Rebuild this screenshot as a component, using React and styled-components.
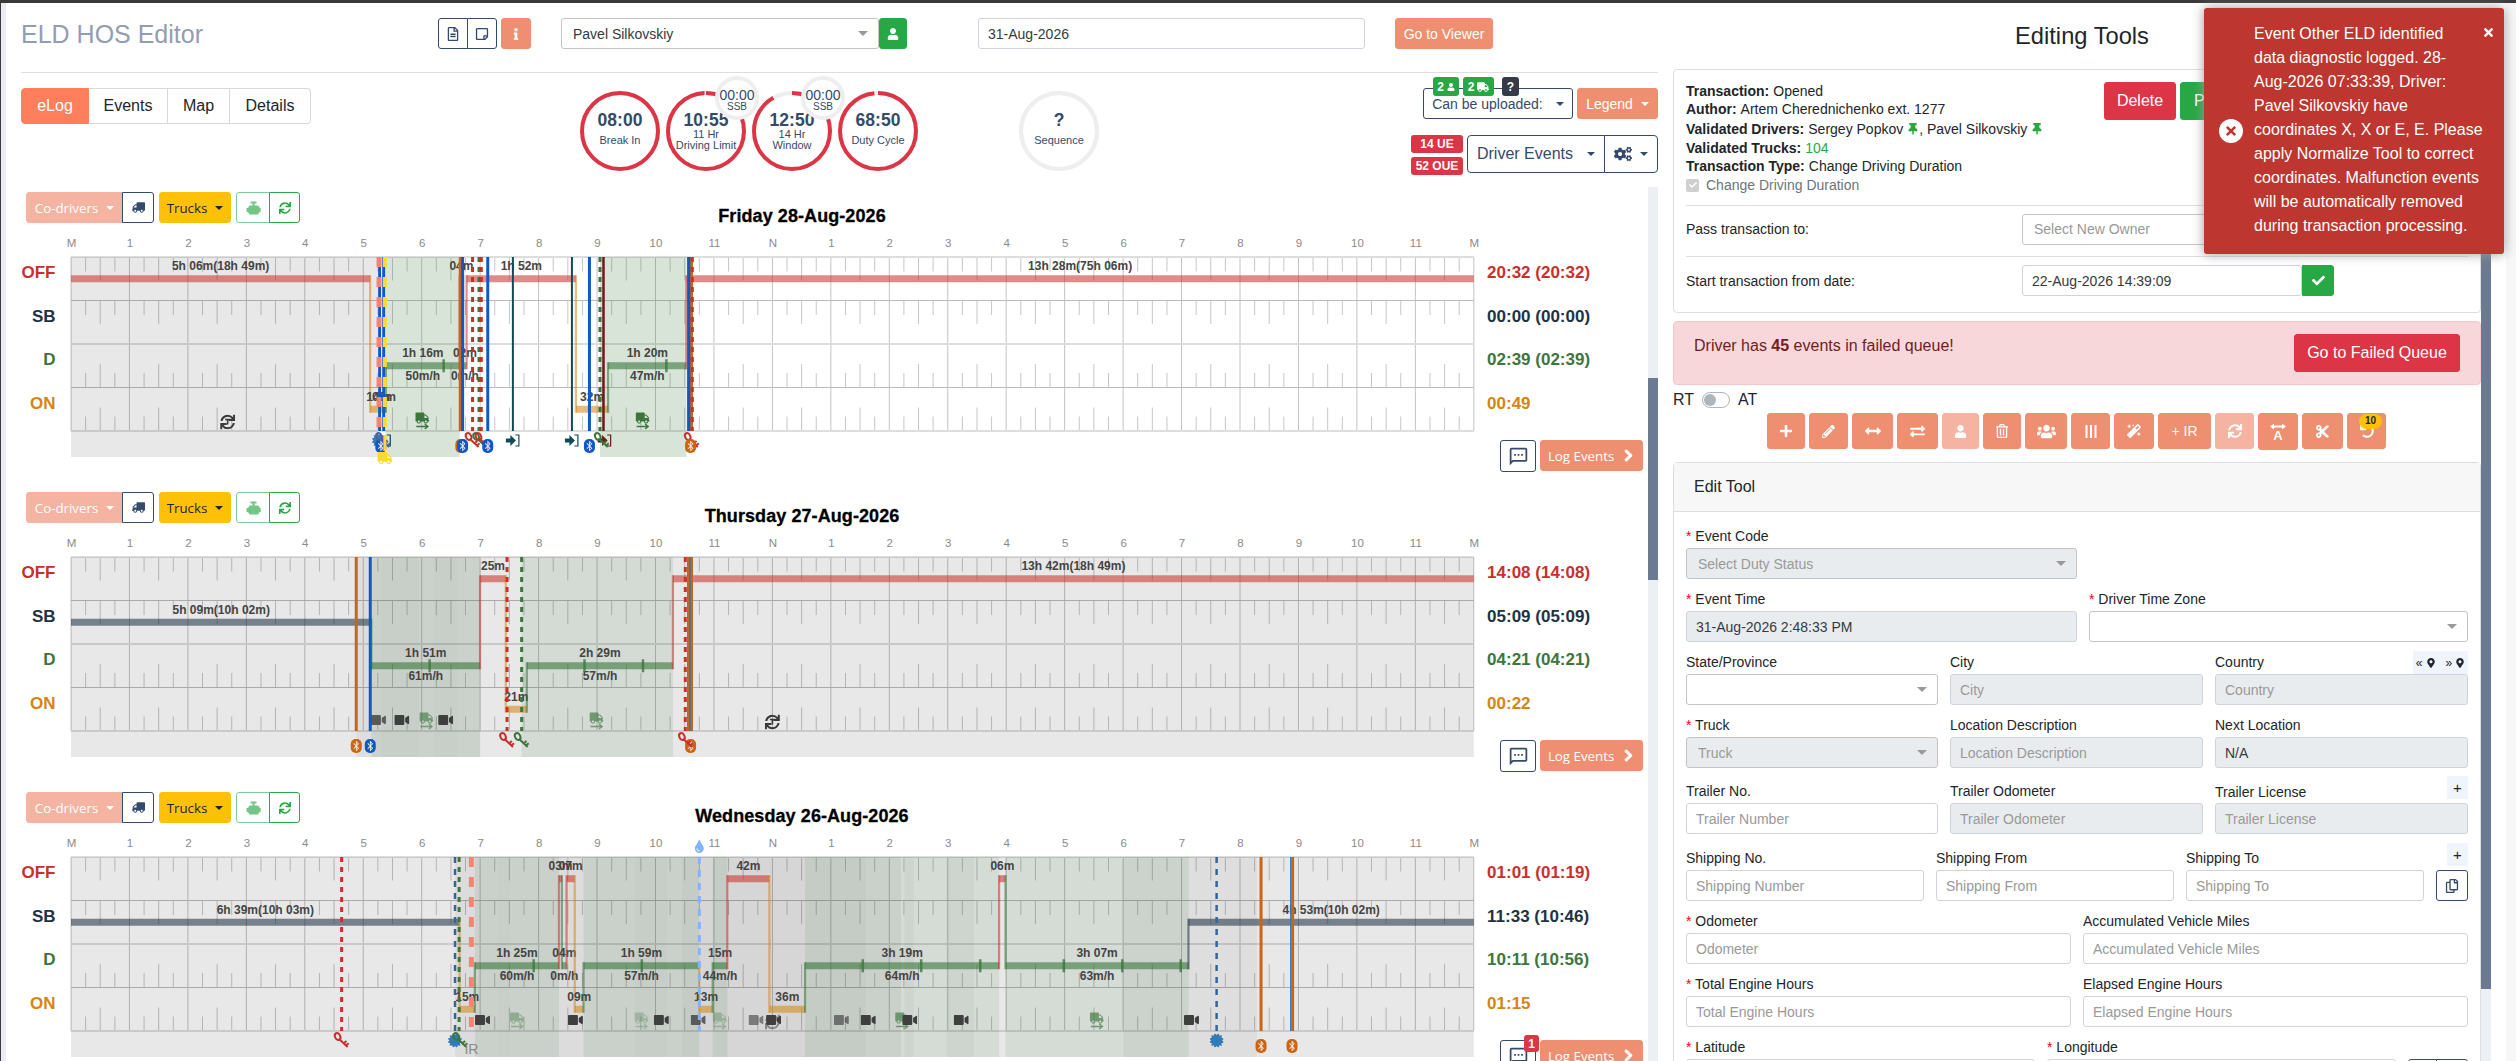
import React from "react";
import styled, { createGlobalStyle, css } from "styled-components";
import {
  FaArrowsAltH,
  FaBluetoothB,
  FaCertificate,
  FaCheck,
  FaChevronRight,
  FaCogs,
  FaCut,
  FaExchangeAlt,
  FaInfo,
  FaMagic,
  FaMapMarkerAlt,
  FaPencilAlt,
  FaPlus,
  FaRegCopy,
  FaRegFileAlt,
  FaRegStickyNote,
  FaRegTrashAlt,
  FaSync,
  FaThumbtack,
  FaTimes,
  FaTint,
  FaTruck,
  FaUndo,
  FaUser,
  FaUsers,
  FaVideo,
} from "react-icons/fa";
import { MdOutlineSms } from "react-icons/md";

const GlobalStyle = createGlobalStyle`
  * { box-sizing: border-box; }
  body {
    margin: 0;
    background: #fff;
    color: #212529;
    font-family: "Liberation Sans", Arial, sans-serif;
    font-size: 14px;
    overflow: hidden;
  }
`;

const colors = {
  navy: "#344a6b",
  coral: "#ee8f71",
  green: "#28a745",
  red: "#dc3545",
};

/* ---------- page frame ---------- */

const Page = styled.div`
  display: flex;
  width: 2516px;
  height: 1061px;
  overflow: hidden;
  border-top: 3px solid #3a3a3a;
  border-left: 1px solid #3a3a3a;
`;

const LeftStrip = styled.div`
  width: 5px;
  background: #ecebf3;
`;

const RightStrip = styled.div`
  width: 10px;
  margin-left: auto;
  background: #f7f7f7;
`;

const Editor = styled.div`
  display: flex;
  flex-direction: column;
  width: 1652px;
`;

const Tools = styled.div`
  width: 818px;
  margin-left: 15px;
`;

/* ---------- shared parts ---------- */

const Button = styled.button`
  position: relative;
  display: flex;
  align-items: center;
  justify-content: center;
  flex: none;
  gap: ${(p) => p.$gap || 8}px;
  width: ${(p) => (p.$w ? `${p.$w}px` : "auto")};
  height: ${(p) => p.$h || 31}px;
  padding: 0;
  border: 1px solid ${(p) => p.$border || p.$bg || colors.navy};
  border-radius: ${(p) => p.$radius || "3px"};
  background: ${(p) => p.$bg || "#fff"};
  color: ${(p) => p.$color || (p.$bg ? "#fff" : colors.navy)};
  font-family: ${(p) => (p.$humanist ? '"Open Sans", sans-serif' : "inherit")};
  font-size: ${(p) => p.$size || 14}px;
  white-space: nowrap;
`;

const Group = styled.div`
  display: flex;

  button + button {
    margin-left: -1px;
  }
`;

const Caret = styled.span`
  border: 4px solid transparent;
  border-top-color: currentColor;
  border-bottom: 0;
`;

const Badge = styled.span`
  display: flex;
  align-items: center;
  justify-content: center;
  gap: 3px;
  width: ${(p) => p.$w}px;
  height: ${(p) => p.$h || 18}px;
  border-radius: 3px;
  background: ${(p) => p.$bg || colors.red};
  color: #fff;
  font-size: 12px;
  font-weight: bold;
`;

const Field = styled.div`
  display: flex;
  align-items: center;
  width: ${(p) => (p.$w ? `${p.$w}px` : "100%")};
  height: 31px;
  padding: 0 9px;
  border: 1px solid #ced4da;
  border-radius: 3px;
  background: ${(p) => (p.$disabled ? "#e9ecef" : "#fff")};
  color: ${(p) => (p.$filled ? "#343a40" : "#999")};
  flex: none;
  ${(p) =>
    p.$select &&
    css`
      padding: 0 10px 0 11px;
      border-color: #c4c4c4;
    `}
`;

const SelectArrow = styled.span`
  margin-left: auto;
  border: 5px solid transparent;
  border-top-color: #999;
  border-bottom: 0;
`;

/* ---------- editor header ---------- */

const Header = styled.div`
  display: flex;
  height: 70px;
  margin-left: 15px;
  padding-top: 15px;
  border-bottom: 1px solid #dedede;
`;

const AppTitle = styled.h1`
  width: 417px;
  margin: 0;
  color: #939db0;
  font-size: 25px;
  font-weight: normal;
  line-height: 32px;
`;

const Spacer = styled.div`
  flex: none;
  width: ${(p) => p.$w}px;
`;

const SubHeader = styled.div`
  display: flex;
  height: 114px;
  padding: 15px 0 0 15px;
`;

const Tabs = styled.div`
  display: flex;
  width: 290px;
  height: 36px;
`;

const Tab = styled.div`
  flex: 0 0 ${(p) => p.$w}px;
  border: 1px solid ${(p) => (p.$active ? "#ff7f5c" : "#d6d9dc")};
  border-left-width: ${(p) => (p.$active ? 1 : 0)}px;
  color: ${(p) => (p.$active ? "#fff" : "#212529")};
  background: ${(p) => (p.$active ? "#ff7f5c" : "#fff")};
  font-size: 16px;
  line-height: 34px;
  text-align: center;

  &:first-child {
    border-radius: 4px 0 0 4px;
  }
  &:last-child {
    border-radius: 0 4px 4px 0;
  }
`;

const Gauges = styled.div`
  display: flex;
  gap: 6px;
  margin: 3px 0 0 269px;
`;

const GaugeBox = styled.div`
  position: relative;
  width: 80px;
  height: 80px;
  margin-left: ${(p) => p.$ml || 0}px;
  color: ${colors.navy};
  text-align: center;

  > svg {
    position: absolute;
    inset: 0;
  }
`;

const GaugeValue = styled.div`
  padding-top: 19px;
  font-size: 17.5px;
  font-weight: bold;
  line-height: 20px;
`;

const GaugeLabel = styled.div`
  margin-top: ${(p) => (p.$lines ? -1 : 5)}px;
  font-size: 11px;
  line-height: 11px;
`;

const MiniGauge = styled.div`
  position: absolute;
  left: 49px;
  top: -15px;
  width: 44px;
  height: 44px;
  padding-top: 8px;
  border: 4px solid #eee;
  border-radius: 50%;
  background: #fff;
  font-size: 14px;
  line-height: 14px;
  white-space: nowrap;

  span {
    display: block;
    margin: 0 -4px;
  }
  small {
    display: block;
    font-size: 10px;
    line-height: 10px;
  }
`;

const Controls = styled.div`
  display: flex;
  flex-direction: column;
  align-items: flex-end;
  gap: 16px;
  margin-left: auto;
`;

const ControlRow = styled.div`
  display: flex;
  gap: 4px;
`;

const UploadBadges = styled.div`
  position: absolute;
  top: -12px;
  left: 9px;
  display: flex;
  gap: 4px;

  span:last-child {
    margin-left: 4px;
  }
`;

const BadgeStack = styled.div`
  display: flex;
  flex-direction: column;
  gap: 4px;
`;

/* ---------- log days ---------- */

const Scroller = styled.div`
  display: flex;
  flex: 1;
  min-height: 0;
`;

const DayList = styled.div`
  flex: 1;
  overflow: hidden;
`;

const Scrollbar = styled.div`
  width: 10px;
  height: ${(p) => p.$h || 874}px;
  padding-top: ${(p) => p.$top}px;
  background: #ecf0f4;

  &::before {
    content: "";
    display: block;
    height: ${(p) => p.$thumb}px;
    background: #6b7a90;
  }
`;

const DayBox = styled.section`
  height: 300px;
`;

const DayHeader = styled.div`
  display: flex;
  height: 70px;
  padding: 5px 0 0 20px;
`;

const DayTools = styled.div`
  display: flex;
  gap: 5px;
  width: 273px;
`;

const DayTitle = styled.h2`
  width: 1006px;
  margin: 14px 0 0;
  color: #000;
  font-size: 18px;
  letter-spacing: 0.08px;
  line-height: 20px;
  text-align: center;
  -webkit-text-stroke: 0.3px #000;
`;

const DayBody = styled.div`
  display: flex;
`;

const RowNames = styled.div`
  width: 49.5px;
  margin-right: 15.8px;
  text-align: right;
`;

const RowText = styled.div`
  height: 43.5px;
  color: ${(p) => p.$color};
  font-size: 17px;
  font-weight: bold;
  line-height: 32px;
`;

const Side = styled.div`
  padding-left: 13px;
`;

const SideActions = styled.div`
  display: flex;
  gap: 4px;
  margin: 9px 0 0 13px;
`;

const CornerBadge = styled(Badge)`
  position: absolute;
  top: -6px;
  right: -4px;
`;

/* ---------- chart ---------- */

const HOUR = 58.45;
const ROW = 43.5;
const X = (h) => h * HOUR;
const rows = ["OFF", "SB", "D", "ON"];
const rowColors = { OFF: "#c9302c", SB: "#1d3344", D: "#3c763d", ON: "#d58512" };
const barColors = { OFF: "#c9302c", SB: "#1c3144", D: "#2f7233", ON: "#d58512" };
const barY = (row) => rows.indexOf(row) * ROW + ROW / 2;
const hourNames = ["M", 1, 2, 3, 4, 5, 6, 7, 8, 9, 10, 11, "N", 1, 2, 3, 4, 5, 6, 7, 8, 9, 10, 11, "M"];

const ChartSvg = styled.svg`
  flex: none;
  overflow: visible;
  font-family: "Liberation Sans", Arial, sans-serif;
`;

const HourText = styled.text`
  fill: #8a8a8a;
  font-size: 11.5px;
  text-anchor: middle;
`;

const BarText = styled.text`
  fill: #444;
  font-size: 12px;
  font-weight: bold;
  text-anchor: middle;
`;

const IrText = styled.text`
  fill: #8a8a8a;
  font-size: 14px;
  text-anchor: middle;
`;

const Grid = () => {
  const quarters = [];
  for (let i = 0; i < 96; i++) if (i % 4) quarters.push(i);
  return (
    <g>
      {quarters.map((i) =>
        rows.map((row, r) => {
          const len = i % 2 ? 14.5 : 23.5;
          const top = r < 2 ? r * ROW : (r + 1) * ROW - len;
          return <line key={`${i}${row}`} x1={X(i / 4)} x2={X(i / 4)} y1={top} y2={top + len} stroke="#c6c6c6" />;
        })
      )}
      {hourNames.map((_, i) => (
        <line key={i} x1={X(i)} x2={X(i)} y1={0} y2={4 * ROW} stroke="#c2c2c2" />
      ))}
      {[0, 1, 2, 3, 4].map((i) => (
        <line
          key={i}
          x1={0}
          x2={X(24)}
          y1={i * ROW}
          y2={i * ROW}
          stroke={i % 2 ? "#bbb" : "#ddd"}
          strokeWidth={i % 2 ? 1 : 2}
        />
      ))}
    </g>
  );
};

const lineStyles = {
  blue: { color: "#1058c8", width: 3 },
  thinBlue: { color: "#2f75b5", width: 1.5 },
  orange: { color: "#c96514", width: 3 },
  wideOrange: { color: "#c96514", width: 6 },
  teal: { color: "#0e4b56", width: 2 },
  maroon: { color: "#6b1a1a", width: 2.5 },
  redDash: { color: "#c9302c", width: 3, dash: "5 5" },
  greenDash: { color: "#3c763d", width: 3, dash: "5 5" },
  blueDash: { color: "#31669b", width: 2.5, dash: "6 6" },
  skyDash: { color: "#82b4fb", width: 3, dash: "7 6" },
  salmonDash: { color: "#ff8173", width: 5, dash: "10 10" },
  yellowDash: { color: "#ffd92e", width: 4, dash: "10 10" },
};

const KeyMark = ({ x, y, color }) => (
  <g transform={`translate(${x} ${y})`} fill="none" stroke={color} strokeWidth="2">
    <ellipse cx="-4" cy="-3.5" rx="2.6" ry="3.6" transform="rotate(-25 -4 -3.5)" />
    <path d="M-2 -0.5 L6 7 M2.2 3.2 L4.8 1 M4.4 5.4 L7 3.2" />
  </g>
);

const BtMark = ({ x, y, color }) => (
  <g>
    <rect x={x - 5.5} y={y - 7} width="11" height="14" rx="5" fill={color} />
    <FaBluetoothB x={x - 5.5} y={y - 5.5} size={11} color="#f4e8e0" />
  </g>
);

const TruckMark = ({ x, y, opacity }) => (
  <g opacity={opacity}>
    <FaTruck x={x - 7} y={y - 9} size={14} color="#3c763d" />
    <path
      d={`M${x - 6} ${y + 6.5} h11 M${x + 2.5} ${y + 4} l3 2.5 l-3 2.5`}
      fill="none"
      stroke="#3c763d"
      strokeWidth="1.5"
    />
  </g>
);

const SyncMark = ({ x, y, opacity }) => (
  <g opacity={opacity}>
    <FaSync x={x - 7.5} y={y - 7.5} size={15} color="#3a3a3a" />
    <path d={`M${x - 2.5} ${y - 2.5} h5 M${x} ${y - 2.5} v5`} stroke="#3a3a3a" strokeWidth="1.6" />
  </g>
);

const EnterMark = ({ x, y, color }) => (
  <g transform={`translate(${x} ${y})`}>
    <path d="M-7 -2 h4.5 v-3.5 l5.5 5.5 l-5.5 5.5 v-3.5 h-4.5z" fill={color} />
    <path d="M2.5 -5.5 h3.5 v11 h-3.5" fill="none" stroke={color} strokeWidth="1.2" />
  </g>
);

const Mark = ({ type, h, color, opacity }) => {
  const x = X(h);
  switch (type) {
    case "camera":
      return <FaVideo x={x - 7.5} y={155.5} size={15} color="#3f3f3f" opacity={opacity} />;
    case "truck":
      return <TruckMark x={x} y={163} opacity={opacity} />;
    case "sync":
      return <SyncMark x={x} y={165} opacity={opacity} />;
    case "key":
      return <KeyMark x={x} y={183} color={color} />;
    case "bt":
      return <BtMark x={x} y={189} color={color} />;
    case "seal":
      return <FaCertificate x={x - 7} y={176.5} size={14} color="#337ab7" />;
    case "enter":
      return <EnterMark x={x} y={183.5} color={color} />;
    case "yellowTruck":
      return (
        <g>
          <rect x={x - 1.5} y={178} width="3" height="16" fill="#ffd92e" />
          <FaTruck x={x - 7.5} y={193.5} size={15} color="#ffd92e" />
        </g>
      );
    case "drop":
      return <FaTint x={x - 6.5} y={-17} size={13} color="#82b4fb" />;
    case "ir":
      return <IrText x={x} y={197}>IR</IrText>;
    default:
      return null;
  }
};

// these sit under the event lines, everything else is drawn over them
const isInner = (mark) => ["camera", "truck", "sync"].includes(mark[0]);

const Chart = ({ day }) => (
  <ChartSvg width={X(24)} height={200}>
    {hourNames.map((name, i) => (
      <HourText key={i} x={X(i) + 0.5} y={-10}>
        {name}
      </HourText>
    ))}
    <Grid />
    {day.bands.map(([from, to, kind], i) => (
      <rect
        key={i}
        x={X(from)}
        width={X(to) - X(from)}
        y={0}
        height={200}
        fill={kind === "green" ? "#3c763d" : "#000"}
        fillOpacity={kind === "green" ? day.greenAlpha : kind}
      />
    ))}
    {day.segments.map(([row, from, to, label, speed], i) => {
      const prev = day.segments[i - 1];
      const y = barY(row);
      return (
        <g key={i}>
          {prev && prev[0] !== row && (
            <rect
              x={X(from) - 1.2}
              width={2.2}
              y={Math.min(barY(prev[0]), y) - 3.5}
              height={Math.abs(barY(prev[0]) - y) + 7}
              fill={barColors[row]}
              opacity=".55"
            />
          )}
          <rect x={X(from)} width={X(to) - X(from)} y={y - 3.5} height={7} fill={barColors[row]} opacity=".56" />
          <BarText x={X((from + to) / 2)} y={y - 8.5}>
            {label}
          </BarText>
          {speed && (
            <BarText x={X((from + to) / 2)} y={y + 14.5}>
              {speed}
            </BarText>
          )}
        </g>
      );
    })}
    {day.ticks.map((h) => (
      <rect key={h} x={X(h) - 1.5} y={barY("D") - 6.5} width={2.5} height={13} fill="#3c763d" opacity=".8" />
    ))}
    {day.marks.filter(isInner).map(([type, h, , opacity], i) => (
      <Mark key={i} type={type} h={h} opacity={opacity} />
    ))}
    {day.lines.map(([style, h], i) => {
      const s = lineStyles[style];
      return (
        <line key={i} x1={X(h)} x2={X(h)} y1={0} y2={174} stroke={s.color} strokeWidth={s.width} strokeDasharray={s.dash} />
      );
    })}
    {day.marks
      .filter((mark) => !isInner(mark))
      .map(([type, h, color], i) => (
        <Mark key={i} type={type} h={h} color={color} />
      ))}
  </ChartSvg>
);

const RED = "#c9302c";
const GREEN = "#3c763d";
const BLUE = "#1058c8";
const ORANGE = "#c96514";
const TEAL = "#0e4b56";

const days = [
  {
    title: "Friday 28-Aug-2026",
    totals: ["20:32 (20:32)", "00:00 (00:00)", "02:39 (02:39)", "00:49"],
    greenAlpha: 0.2,
    bands: [
      [0, 5.25, 0.09],
      [5.38, 6.65, "green"],
      [9.05, 10.53, "green"],
    ],
    segments: [
      ["OFF", 0, 5.12, "5h 06m(18h 49m)"],
      ["ON", 5.12, 5.39, "14m"],
      ["ON", 5.32, 5.39, "02m"],
      ["D", 5.39, 6.65, "1h 16m", "50m/h"],
      ["OFF", 6.65, 6.71, "04m"],
      ["D", 6.71, 6.77, "02m", "0m/h"],
      ["OFF", 6.77, 8.64, "1h 52m"],
      ["ON", 8.64, 9.19, "32m"],
      ["D", 9.19, 10.53, "1h 20m", "47m/h"],
      ["OFF", 10.53, 24, "13h 28m(75h 06m)"],
    ],
    ticks: [6.38, 10.19],
    lines: [
      ["blue", 5.28],
      ["blue", 5.35],
      ["salmonDash", 5.27],
      ["yellowDash", 5.37],
      ["orange", 6.66],
      ["blue", 6.7],
      ["redDash", 6.87],
      ["greenDash", 6.98],
      ["redDash", 7.02],
      ["blue", 7.13],
      ["teal", 7.56],
      ["teal", 8.57],
      ["blue", 8.87],
      ["greenDash", 9.05],
      ["maroon", 9.11],
      ["wideOrange", 10.59],
      ["blue", 10.57],
      ["redDash", 10.63],
    ],
    marks: [
      ["sync", 2.68],
      ["truck", 6.01],
      ["truck", 9.78],
      ["enter", 5.36, TEAL],
      ["seal", 5.27],
      ["bt", 5.3, BLUE],
      ["key", 5.34, "#4d5fa8"],
      ["yellowTruck", 5.37],
      ["key", 6.87, RED],
      ["key", 7.0, GREEN],
      ["key", 7.04, RED],
      ["bt", 6.67, ORANGE],
      ["bt", 6.7, BLUE],
      ["bt", 7.13, BLUE],
      ["enter", 7.56, TEAL],
      ["enter", 8.57, TEAL],
      ["bt", 8.87, BLUE],
      ["enter", 9.13, "#6b1a1a"],
      ["key", 9.08, GREEN],
      ["key", 10.62, RED],
      ["bt", 10.6, ORANGE],
    ],
  },
  {
    title: "Thursday 27-Aug-2026",
    totals: ["14:08 (14:08)", "05:09 (05:09)", "04:21 (04:21)", "00:22"],
    greenAlpha: 0.115,
    bands: [
      [0, 24, 0.09],
      [4.88, 7, 0.045],
      [5.3, 5.95, 0.015],
      [6.2, 6.62, 0.015],
      [5.14, 7, "green"],
      [7.71, 10.3, "green"],
    ],
    segments: [
      ["SB", 0, 5.14, "5h 09m(10h 02m)"],
      ["D", 5.14, 7, "1h 51m", "61m/h"],
      ["OFF", 7, 7.44, "25m"],
      ["ON", 7.44, 7.8, "21m"],
      ["D", 7.8, 10.3, "2h 29m", "57m/h"],
      ["OFF", 10.3, 24, "13h 42m(18h 49m)"],
    ],
    ticks: [6.14, 8.79, 9.79],
    lines: [
      ["orange", 4.88],
      ["blue", 5.12],
      ["redDash", 7.46],
      ["greenDash", 7.71],
      ["redDash", 10.51],
      ["wideOrange", 10.59],
      ["thinBlue", 10.59],
    ],
    marks: [
      ["camera", 5.26, null, 0.8],
      ["camera", 5.66],
      ["truck", 6.08, null, 0.6],
      ["camera", 6.41],
      ["truck", 8.99, null, 0.65],
      ["sync", 12],
      ["bt", 4.88, ORANGE],
      ["bt", 5.12, BLUE],
      ["key", 7.46, RED],
      ["key", 7.71, GREEN],
      ["bt", 10.6, ORANGE],
      ["key", 10.52, RED],
    ],
  },
  {
    title: "Wednesday 26-Aug-2026",
    totals: ["01:01 (01:19)", "11:33 (10:46)", "10:11 (10:56)", "01:15"],
    comments: 1,
    greenAlpha: 0.105,
    bands: [
      [0, 24, 0.09],
      [6.57, 14.2, 0.05],
      [7.3, 7.5, 0.012],
      [9.65, 10.2, 0.015],
      [10.45, 13.6, 0.025],
      [14.26, 14.42, 0.03],
      [14.98, 15.45, 0.03],
      [18, 20.29, 0.045],
      [6.91, 8.35, "green"],
      [8.77, 10.75, "green"],
      [10.98, 11.23, "green"],
      [12.56, 15.88, "green"],
      [15.99, 19.12, "green"],
    ],
    segments: [
      ["SB", 0, 6.65, "6h 39m(10h 03m)"],
      ["ON", 6.65, 6.91, "15m"],
      ["D", 6.91, 8.35, "1h 25m", "60m/h"],
      ["OFF", 8.35, 8.4, "03m"],
      ["D", 8.4, 8.48, "04m", "0m/h"],
      ["OFF", 8.48, 8.62, "07m"],
      ["ON", 8.62, 8.77, "09m"],
      ["D", 8.77, 10.75, "1h 59m", "57m/h"],
      ["ON", 10.75, 10.98, "13m"],
      ["D", 10.98, 11.23, "15m", "44m/h"],
      ["OFF", 11.23, 11.95, "42m"],
      ["ON", 11.95, 12.56, "36m"],
      ["D", 12.56, 15.88, "3h 19m", "64m/h"],
      ["OFF", 15.88, 15.99, "06m"],
      ["D", 15.99, 19.12, "3h 07m", "63m/h"],
      ["SB", 19.12, 24, "4h 53m(10h 02m)"],
    ],
    ticks: [7.92, 9.77, 13.55, 14.55, 15.56, 16.99, 17.99, 18.99],
    lines: [
      ["redDash", 4.63],
      ["blueDash", 6.57],
      ["greenDash", 6.64],
      ["salmonDash", 6.85],
      ["skyDash", 10.75],
      ["blueDash", 19.6],
      ["orange", 20.36],
      ["thinBlue", 20.87],
      ["orange", 20.9],
    ],
    marks: [
      ["camera", 7.04],
      ["truck", 7.63, null, 0.4],
      ["camera", 8.63],
      ["truck", 9.76, null, 0.28],
      ["camera", 10.1],
      ["camera", 10.73, null, 0.8],
      ["truck", 11.1, null, 0.32],
      ["camera", 11.72, null, 0.6],
      ["sync", 12, null, 0.5],
      ["camera", 12.02],
      ["camera", 13.18, null, 0.65],
      ["camera", 13.64],
      ["truck", 14.22, null, 0.65],
      ["camera", 14.35],
      ["camera", 15.23],
      ["truck", 17.55, null, 0.65],
      ["camera", 19.17],
      ["key", 4.63, RED],
      ["seal", 6.57],
      ["key", 6.66, GREEN],
      ["ir", 6.85],
      ["drop", 10.75],
      ["seal", 19.6],
      ["bt", 20.36, ORANGE],
      ["bt", 20.89, ORANGE],
    ],
  },
];

const EngineIcon = () => (
  <svg width="15" height="14" viewBox="0 0 15 14" fill="#74c687">
    <rect x="4.5" y="0.5" width="6" height="2" />
    <rect x="6.5" y="2" width="2" height="3" />
    <path d="M3.5 4.5 h8 l2 1 v1.5 h1.2 v4 h-1.2 l-1.5 2.5 h-8.5 l-1.5 -2.5 h-1.5 v-4 h1.5z" />
  </svg>
);

const Flip = styled.span`
  display: flex;
  transform: scaleX(-1);
`;

const Day = ({ day }) => (
  <DayBox>
    <DayHeader>
      <DayTools>
        <Group>
          <Button $w={97} $bg="#f5b3a1" $humanist $size={13.3} $radius="3px 0 0 3px">
            Co-drivers <Caret />
          </Button>
          <Button $w={32} $radius="0 3px 3px 0">
            <Flip>
              <FaTruck size={13} />
            </Flip>
          </Button>
        </Group>
        <Button $w={72} $bg="#ffc107" $color="#212529" $humanist $size={13.3}>
          Trucks <Caret />
        </Button>
        <Group>
          <Button $w={34} $border="#7fcb91" $radius="3px 0 0 3px">
            <EngineIcon />
          </Button>
          <Button $w={31} $border={colors.green} $color={colors.green} $radius="0 3px 3px 0">
            <FaSync size={12} />
          </Button>
        </Group>
      </DayTools>
      <DayTitle>{day.title}</DayTitle>
    </DayHeader>
    <DayBody>
      <RowNames>
        {rows.map((row) => (
          <RowText key={row} $color={rowColors[row]}>
            {row}
          </RowText>
        ))}
      </RowNames>
      <Chart day={day} />
      <Side>
        {day.totals.map((total, i) => (
          <RowText key={i} $color={rowColors[rows[i]]}>
            {total}
          </RowText>
        ))}
        <SideActions>
          <Button $w={36} $h={32}>
            <MdOutlineSms size={21} />
            {day.comments && (
              <CornerBadge $w={15} $h={17}>
                {day.comments}
              </CornerBadge>
            )}
          </Button>
          <Button $w={103} $bg={colors.coral} $humanist $size={13.3}>
            Log Events <FaChevronRight size={13} strokeWidth={40} stroke="currentColor" />
          </Button>
        </SideActions>
      </Side>
    </DayBody>
  </DayBox>
);

const Gauge = ({ value, label, lines, part = 1, color = colors.red, mini, ml }) => {
  const length = 2 * Math.PI * 38;
  return (
    <GaugeBox $ml={ml}>
      <svg width="80" height="80" fill="none" strokeWidth="4">
        <circle cx="40" cy="40" r="38" stroke="#eee" />
        <circle
          cx="40"
          cy="40"
          r="38"
          stroke={color}
          strokeDasharray={`${length * part} ${length}`}
          transform="rotate(-90 40 40)"
        />
      </svg>
      <GaugeValue>{value}</GaugeValue>
      <GaugeLabel $lines={lines}>
        {label}
        {lines && (
          <>
            <br />
            {lines}
          </>
        )}
      </GaugeLabel>
      {mini && (
        <MiniGauge>
          <span>{mini}</span>
          <small>SSB</small>
        </MiniGauge>
      )}
    </GaugeBox>
  );
};

/* ---------- editing tools ---------- */

const ToolsTitle = styled.h2`
  height: 66px;
  margin: 0;
  padding: 16px 0 0;
  font-size: 23.7px;
  font-weight: normal;
  line-height: 34px;
  text-align: center;
`;

const ToolsBody = styled.div`
  display: flex;
`;

const ToolsColumn = styled.div`
  width: 808px;
`;

const Card = styled.div`
  border: 1px solid #dedede;
  border-radius: 4px;
`;

const InfoCard = styled(Card)`
  height: 244px;
  padding: 12px 12px 0;
`;

const InfoTop = styled.div`
  display: flex;
  justify-content: space-between;
  height: 124px;
  border-bottom: 1px solid #dedede;
`;

const InfoLine = styled.div`
  display: flex;
  align-items: center;
  height: ${(p) => p.$h || 18}px;
  white-space: pre;
  color: ${(p) => (p.$muted ? "#6c757d" : "inherit")};

  b {
    margin-right: 4px;
  }
  em {
    color: ${colors.green};
    font-style: normal;
  }
`;

const CheckBox = styled.span`
  display: flex;
  align-items: center;
  justify-content: center;
  width: 13px;
  height: 13px;
  margin-right: 7px;
  border-radius: 2px;
  background: #cfcfcf;
  color: #fff;
`;

const InfoButtons = styled.div`
  display: flex;
  gap: 4px;
  width: 364px;
`;

const InfoRow = styled.div`
  display: flex;
  align-items: center;
  height: 51px;
  padding-bottom: 4px;
  border-bottom: ${(p) => (p.$last ? 0 : "1px solid #dedede")};

  > span:first-child {
    width: 336px;
  }
`;

const Alert = styled.div`
  display: flex;
  justify-content: space-between;
  height: 64px;
  margin-top: 8px;
  padding: 12px 20px;
  border: 1px solid #f5c6cb;
  border-radius: 4px;
  background: #f8d7da;
  color: #721c24;
  font-size: 16px;
  line-height: 24px;
`;

const Toggle = styled.div`
  display: flex;
  align-items: center;
  gap: 8px;
  height: 28px;
  padding-top: 2px;
  font-size: 16px;
`;

const Switch = styled.span`
  width: 28px;
  height: 16px;
  padding: 1px;
  border: 1px solid #adb5bd;
  border-radius: 8px;

  &::before {
    content: "";
    display: block;
    width: 12px;
    height: 12px;
    border-radius: 50%;
    background: #adb5bd;
  }
`;

const ToolRow = styled.div`
  display: flex;
  gap: 4px;
  height: 49px;
  padding-left: 94px;
`;

const TextWidth = styled.span`
  display: flex;
  flex-direction: column;
  align-items: center;
  font-size: 13px;
  font-weight: bold;
  line-height: 11px;
`;

const RoundBadge = styled.span`
  position: absolute;
  top: 0;
  right: 3px;
  width: 23px;
  height: 15px;
  border-radius: 8px;
  background: #ffc107;
  color: #212529;
  font-size: 10px;
  font-weight: bold;
  line-height: 14px;
`;

const CardHeader = styled.div`
  height: 49px;
  padding-left: 20px;
  border-bottom: 1px solid #dedede;
  background: #f7f7f7;
  font-size: 16px;
  line-height: 47px;
`;

const Form = styled.div`
  padding: 4px 12px 0;
`;

const FormRow = styled.div`
  display: flex;
  align-items: flex-end;
  gap: 12px;
  height: ${(p) => p.$h || 63}px;
`;

const FormItem = styled.div`
  width: ${(p) => p.$w}px;
  flex: none;
`;

const LabelRow = styled.div`
  display: flex;
  align-items: flex-end;
  justify-content: space-between;
  height: 24px;

  label {
    line-height: 16px;
    margin-bottom: ${(p) => (p.$low ? 3 : 4)}px;
  }
  i {
    color: red;
    font-style: normal;
  }
`;

const MiniButton = styled.span`
  display: flex;
  align-items: center;
  justify-content: center;
  gap: 10px;
  width: ${(p) => p.$w}px;
  height: 23px;
  margin-bottom: ${(p) => p.$mb || 0}px;
  background: #eff4fd;
  font-size: ${(p) => (p.$w > 30 ? 12 : 15)}px;

  span {
    display: flex;
    align-items: center;
    gap: 3px;
  }
`;

const Toast = styled.div`
  position: absolute;
  top: 8px;
  left: 2204px;
  width: 300px;
  height: 246px;
  padding: 14px 0 0 50px;
  border-radius: 3px;
  background: #bd362f;
  box-shadow: 0 0 12px #999;
  color: #fff;
  font-size: 16px;
  line-height: 24px;
`;

const ToastText = styled.div`
  white-space: nowrap;
`;

const ToastIcon = styled.span`
  position: absolute;
  top: 111px;
  left: 15px;
  display: flex;
  align-items: center;
  justify-content: center;
  width: 24px;
  height: 24px;
  border-radius: 50%;
  background: #fff;
  color: #bd362f;
`;

const ToastClose = styled.span`
  position: absolute;
  top: 18px;
  right: 9px;
  display: flex;
`;

const Input = ({ label, w, text, required, disabled, select, filled, extra, extraW, extraMb, low }) => (
  <FormItem $w={w}>
    <LabelRow $low={low}>
      <label>
        {required && <i>* </i>}
        {label}
      </label>
      {extra && (
        <MiniButton $w={extraW} $mb={extraMb}>
          {extra}
        </MiniButton>
      )}
    </LabelRow>
    <Field $disabled={disabled} $select={select} $filled={filled}>
      {text}
      {select && <SelectArrow />}
    </Field>
  </FormItem>
);

const toolButtons = [
  { w: 38, icon: <FaPlus size={14} /> },
  { w: 39, icon: <FaPencilAlt size={13} /> },
  { w: 41, icon: <FaArrowsAltH size={16} /> },
  { w: 41, icon: <FaExchangeAlt size={15} /> },
  { w: 37, icon: <FaUser size={13} />, off: true },
  { w: 38, icon: <FaRegTrashAlt size={14} /> },
  { w: 42, icon: <FaUsers size={19} /> },
  {
    w: 39,
    icon: (
      <svg width="12" height="13" stroke="#fff" strokeWidth="2">
        <path d="M1.5 0 V13 M6 0 V13 M10.5 0 V13" />
      </svg>
    ),
  },
  { w: 40, icon: <FaMagic size={14} /> },
  { w: 53, icon: "+ IR" },
  { w: 39, icon: <FaSync size={14} />, off: true },
  {
    w: 40,
    h: 37,
    icon: (
      <TextWidth>
        <svg width="16" height="7" viewBox="0 0 16 7" fill="#fff">
          <path d="M0 3.5 L4 0.5 V2.5 H12 V0.5 L16 3.5 L12 6.5 V4.5 H4 V6.5z" />
        </svg>
        <span>A</span>
      </TextWidth>
    ),
  },
  { w: 41, icon: <FaCut size={15} /> },
  {
    w: 39,
    icon: (
      <>
        <FaUndo size={14} />
        <RoundBadge>10</RoundBadge>
      </>
    ),
  },
];

const toastLines = [
  "Event Other ELD identified",
  "data diagnostic logged. 28-",
  "Aug-2026 07:33:39, Driver:",
  "Pavel Silkovskiy have",
  "coordinates X, X or E, E. Please",
  "apply Normalize Tool to correct",
  "coordinates. Malfunction events",
  "will be automatically removed",
  "during transaction processing.",
];

const App = () => (
  <>
    <GlobalStyle />
    <Page>
      <LeftStrip />
      <Editor>
        <Header>
          <AppTitle>ELD HOS Editor</AppTitle>
          <Group>
            <Button $w={30} $radius="3px 0 0 3px">
              <FaRegFileAlt size={14} />
            </Button>
            <Button $w={30} $radius="0 3px 3px 0">
              <FaRegStickyNote size={14} />
            </Button>
          </Group>
          <Spacer $w={4} />
          <Button $w={30} $bg={colors.coral}>
            <FaInfo size={12} />
          </Button>
          <Spacer $w={30} />
          <Field $w={318} $select $filled>
            Pavel Silkovskiy <SelectArrow />
          </Field>
          <Button $w={28} $bg={colors.green}>
            <FaUser size={12} />
          </Button>
          <Spacer $w={71} />
          <Field $w={387} $filled>
            31-Aug-2026
          </Field>
          <Spacer $w={30} />
          <Button $w={98} $bg={colors.coral}>
            Go to Viewer
          </Button>
        </Header>
        <SubHeader>
          <Tabs>
            <Tab $w={68} $active>eLog</Tab>
            <Tab $w={79}>Events</Tab>
            <Tab $w={62}>Map</Tab>
            <Tab $w={81}>Details</Tab>
          </Tabs>
          <Gauges>
            <Gauge value="08:00" label="Break In" />
            <Gauge value="10:55" label="11 Hr" lines="Driving Limit" part={0.992} mini="00:00" />
            <Gauge value="12:50" label="14 Hr" lines="Window" part={0.917} mini="00:00" />
            <Gauge value="68:50" label="Duty Cycle" part={0.983} />
            <Gauge value="?" label="Sequence" color="#eee" ml={95} />
          </Gauges>
          <Controls>
            <ControlRow>
              <Button $w={150} $gap={13}>
                <UploadBadges>
                  <Badge $w={26} $h={19} $bg={colors.green}>
                    2 <FaUser size={8} />
                  </Badge>
                  <Badge $w={31} $h={19} $bg={colors.green}>
                    2 <FaTruck size={12} />
                  </Badge>
                  <Badge $w={17} $h={19} $bg="#343a48">?</Badge>
                </UploadBadges>
                Can be uploaded: <Caret />
              </Button>
              <Button $w={81} $bg={colors.coral}>
                Legend <Caret />
              </Button>
            </ControlRow>
            <ControlRow>
              <BadgeStack>
                <Badge $w={52}>14 UE</Badge>
                <Badge $w={52}>52 OUE</Badge>
              </BadgeStack>
              <Group>
                <Button $w={138} $h={38} $size={16} $gap={14} $radius="4px 0 0 4px">
                  Driver Events <Caret />
                </Button>
                <Button $w={54} $h={38} $radius="0 4px 4px 0">
                  <FaCogs size={18} /> <Caret />
                </Button>
              </Group>
            </ControlRow>
          </Controls>
        </SubHeader>
        <Scroller>
          <DayList>
            {days.map((day) => (
              <Day key={day.title} day={day} />
            ))}
          </DayList>
          <Scrollbar $top={191} $thumb={202} />
        </Scroller>
      </Editor>
      <Tools>
        <ToolsTitle>Editing Tools</ToolsTitle>
        <ToolsBody>
          <ToolsColumn>
            <InfoCard>
              <InfoTop>
                <div>
                  <InfoLine><b>Transaction:</b>Opened</InfoLine>
                  <InfoLine><b>Author:</b>Artem Cherednichenko ext. 1277</InfoLine>
                  <InfoLine $h={22}>
                    <b>Validated Drivers:</b>Sergey Popkov <FaThumbtack size={12} color={colors.green} />, Pavel Silkovskiy{" "}
                    <FaThumbtack size={12} color={colors.green} />
                  </InfoLine>
                  <InfoLine $h={16}><b>Validated Trucks:</b><em>104</em></InfoLine>
                  <InfoLine $h={20}><b>Transaction Type:</b>Change Driving Duration</InfoLine>
                  <InfoLine $muted>
                    <CheckBox><FaCheck size={8} /></CheckBox>
                    Change Driving Duration
                  </InfoLine>
                </div>
                <InfoButtons>
                  <Button $w={72} $h={38} $bg={colors.red} $size={16}>Delete</Button>
                  <Button $w={60} $h={38} $bg={colors.green} $size={16}>Post</Button>
                </InfoButtons>
              </InfoTop>
              <InfoRow>
                <span>Pass transaction to:</span>
                <Field $w={312} $select>
                  Select New Owner <SelectArrow />
                </Field>
              </InfoRow>
              <InfoRow $last>
                <span>Start transaction from date:</span>
                <Field $w={280} $filled>22-Aug-2026 14:39:09</Field>
                <Button $w={32} $bg={colors.green} $radius="0 3px 3px 0">
                  <FaCheck size={13} />
                </Button>
              </InfoRow>
            </InfoCard>
            <Alert>
              <div>
                Driver has <b>45</b> events in failed queue!
              </div>
              <Button $w={166} $h={38} $bg={colors.red} $size={16}>Go to Failed Queue</Button>
            </Alert>
            <Toggle>
              RT <Switch /> AT
            </Toggle>
            <ToolRow>
              {toolButtons.map((tool, i) => (
                <Button key={i} $w={tool.w} $h={tool.h || 36} $bg={tool.off ? "#f5b3a1" : colors.coral}>
                  {tool.icon}
                </Button>
              ))}
            </ToolRow>
            <Card>
              <CardHeader>Edit Tool</CardHeader>
              <Form>
                <FormRow>
                  <Input label="Event Code" w={391} text="Select Duty Status" required disabled select />
                </FormRow>
                <FormRow>
                  <Input label="Event Time" w={391} text="31-Aug-2026 2:48:33 PM" required disabled filled />
                  <Input label="Driver Time Zone" w={379} required select />
                </FormRow>
                <FormRow>
                  <Input label="State/Province" w={252} select />
                  <Input label="City" w={253} text="City" disabled />
                  <Input
                    label="Country"
                    w={253}
                    text="Country"
                    disabled
                    extraW={55}
                    extra={
                      <>
                        <span>« <FaMapMarkerAlt size={10} /></span>
                        <span>» <FaMapMarkerAlt size={10} /></span>
                      </>
                    }
                  />
                </FormRow>
                <FormRow>
                  <Input label="Truck" w={252} text="Truck" required disabled select />
                  <Input label="Location Description" w={253} text="Location Description" disabled />
                  <Input label="Next Location" w={253} text="N/A" disabled filled />
                </FormRow>
                <FormRow $h={66}>
                  <Input label="Trailer No." w={252} text="Trailer Number" />
                  <Input label="Trailer Odometer" w={253} text="Trailer Odometer" disabled />
                  <Input label="Trailer License" w={253} text="Trailer License" disabled low extra="+" extraW={21} extraMb={4} />
                </FormRow>
                <FormRow $h={67}>
                  <Input label="Shipping No." w={238} text="Shipping Number" />
                  <Input label="Shipping From" w={238} text="Shipping From" />
                  <Input label="Shipping To" w={238} text="Shipping To" />
                  <FormItem $w={32}>
                    <LabelRow>
                      <span />
                      <MiniButton $w={21} $mb={4}>+</MiniButton>
                    </LabelRow>
                    <Button $w={32}>
                      <FaRegCopy size={14} />
                    </Button>
                  </FormItem>
                </FormRow>
                <FormRow>
                  <Input label="Odometer" w={385} text="Odometer" required />
                  <Input label="Accumulated Vehicle Miles" w={385} text="Accumulated Vehicle Miles" />
                </FormRow>
                <FormRow>
                  <Input label="Total Engine Hours" w={385} text="Total Engine Hours" required />
                  <Input label="Elapsed Engine Hours" w={385} text="Elapsed Engine Hours" />
                </FormRow>
                <FormRow>
                  <Input label="Latitude" w={349} required />
                  <Input label="Longitude" w={349} required />
                  <Group>
                    <Button $w={29} $radius="3px 0 0 3px" />
                    <Button $w={32} $radius="0 3px 3px 0" />
                  </Group>
                </FormRow>
              </Form>
            </Card>
          </ToolsColumn>
          <Scrollbar $top={20} $thumb={900} $h={992} />
        </ToolsBody>
      </Tools>
      <RightStrip />
    </Page>
    <Toast>
      {toastLines.map((line) => (
        <ToastText key={line}>{line}</ToastText>
      ))}
      <ToastIcon>
        <FaTimes size={14} />
      </ToastIcon>
      <ToastClose>
        <FaTimes size={13} />
      </ToastClose>
    </Toast>
  </>
);

export default App;
